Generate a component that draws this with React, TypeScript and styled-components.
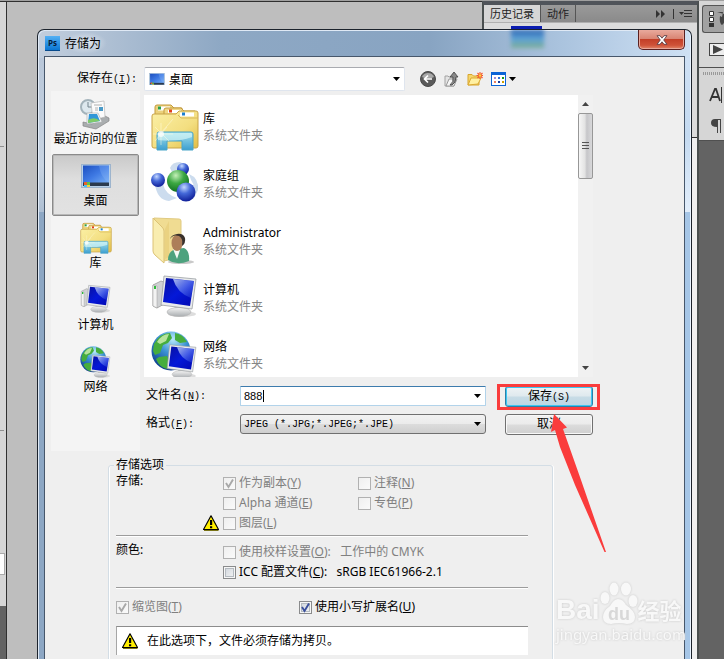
import React from "react";
import styled, { createGlobalStyle, css } from "styled-components";

const uiFont = `"Noto Sans", "Noto Sans CJK SC", sans-serif`;
const monoFont = `"Liberation Mono", "Noto Sans CJK SC", monospace`;

const GlobalStyle = createGlobalStyle`
  * { box-sizing: border-box; }
  html, body, #root { height: 100%; }
  body {
    margin: 0;
    overflow: hidden;
    font: 12px/16px ${uiFont};
    color: #000;
    background: #bebebe;
  }
  button, input, select { font: inherit; color: inherit; margin: 0; padding: 0; }
  svg { flex: none; }
`;

/* ---------- application workspace ---------- */

const Workspace = styled.div`
  position: relative;
  display: grid;
  grid-template-columns: 7px 1fr 216px 26px;
  height: 100%;
  overflow: hidden;
  border-top: 1px solid #a0a0a0;
  background: #bebebe;
`;

const ToolStrip = styled.div`
  display: flex;
  flex-direction: column;
  border-top: 1px solid #303030;
  border-right: 1px solid #303030;
  background: #636363;
`;

const ToolStripTop = styled.div`
  height: 604px;
  padding: 144px 4px 0 0;
  background: #d6d6d6;
`;

const ToolMark = styled.div`
  height: 1px;
  margin-bottom: 283px;
  margin-right: -2px;
  background: #909090;
`;

const ToolSwatch = styled.div`
  height: 22px;
  margin-top: -161px;
  margin-right: -3px;
  border: 1px solid #aaa;
  border-left: 0;
  background: #fff;
`;

const Canvas = styled.div`
  border-top: 1px solid #303030;
`;

const Palette = styled.section`
  border-left: 2px solid #4a4f4f;
  border-right: 1px solid #4a4f4f;
  border-top: 4px solid #50545a;
  background: #f0f0f0;
`;

const PaletteTabs = styled.div`
  display: flex;
  align-items: stretch;
  height: 17px;
  background: linear-gradient(#9a9a9a, #8a8a8a);
`;

const PaletteTab = styled.button<{ $active?: boolean }>`
  border: 0;
  border-right: 1px solid #555;
  padding: 0 6px;
  line-height: 16px;
  font-size: 11px;
  color: #222;
  background: ${(p) => (p.$active ? "#d6d6d6" : "transparent")};
`;

const PaletteTools = styled.div`
  display: flex;
  align-items: center;
  margin-left: auto;
  padding-right: 4px;
`;

const PaletteBody = styled.div`
  height: 116px;
  padding-left: 27px;
  border-top: 1px solid #b0b0b0;
  border-bottom: 1px solid #303030;
  background: #dcdcdc;
`;

const Thumb = styled.div`
  width: 31px;
  height: 26px;
  margin-top: 3px;
  border-top: 3px solid #0a1cb0;
  background: linear-gradient(#3a86cf, #86b9a8 60%, #74a868);
`;

const Dock = styled.aside`
  border-left: 1px solid #4a4f4f;
  background: #636363;
`;

const DockGroup = styled.div<{ $height: number }>`
  display: flex;
  flex-direction: column;
  height: ${(p) => p.$height}px;
  overflow: hidden;
  border-bottom: 1px solid #505050;
  background: #d6d6d6;
`;

const Grip = styled.div`
  height: 3px;
  margin: 4px 0 6px 4px;
  background: repeating-linear-gradient(90deg, #999 0 1px, #d6d6d6 1px 2px);
  &:first-child:not(:only-child) { flex: none; }
`;

const DockSpacer = styled.div`
  flex: none;
  height: 4px;
`;

const DockButton = styled.button<{ $pressed?: boolean; $height: number }>`
  display: flex;
  flex: none;
  align-items: center;
  height: ${(p) => p.$height}px;
  margin-left: 3px;
  padding-left: 6px;
  border: 1px solid ${(p) => (p.$pressed ? "#555" : "transparent")};
  border-right: 0;
  border-radius: 3px 0 0 3px;
  background: ${(p) => (p.$pressed ? "#a2a2a2" : "transparent")};
`;

/* ---------- dialog window ---------- */

const Dialog = styled.section`
  position: absolute;
  top: 28px;
  left: 37px;
  right: 32px;
  bottom: 0;
  display: flex;
  flex-direction: column;
  padding: 0 6px;
  overflow: hidden;
  border: 1px solid #1c232c;
  border-bottom: 0;
  border-radius: 7px 7px 0 0;
  box-shadow: inset 1px 1px 0 #dfe9f5, inset -1px 0 0 #eaf4ff;
  background:
    linear-gradient(90deg, #c2cedd 0, #8ea8c4 28%, #88a4c2 60%, #aac3de 80%, #cfe1f4 100%) 0 0 / 100% 28px no-repeat,
    linear-gradient(#b9c7d9, #c8d4e2 70%, #aebfd3) 0 28px / 50% 154px no-repeat,
    linear-gradient(#cfe1f5, #c4daf1 50%, #e2eefb) 100% 28px / 50% 154px no-repeat,
    linear-gradient(90deg, #8da7c4 50%, #a6c6e7 50%);
`;

const TitleBar = styled.header`
  display: flex;
  align-items: center;
  gap: 5px;
  height: 28px;
`;

const Title = styled.h1`
  margin: 0;
  font: 12px/20px ${uiFont};
  padding: 2px 6px 0 0;
  background: radial-gradient(closest-side, rgba(255, 255, 255, 0.55), rgba(255, 255, 255, 0));
`;

const Glimpse = styled.div`
  width: 33px;
  height: 18px;
  margin: 0 89px 8px auto;
  filter: blur(2px);
  background: linear-gradient(#2e66b4, #5ea3d6 50%, #7fae94);
`;

const CloseButton = styled.button`
  display: grid;
  place-items: center;
  align-self: flex-start;
  width: 47px;
  height: 20px;
  border: 1px solid #5a2020;
  border-top: 0;
  border-radius: 0 0 5px 5px;
  box-shadow: inset 0 0 0 1px #e8a79a;
  background: linear-gradient(#e9aa9d, #d98574 45%, #c33f28 50%, #cf5238 80%, #e2876a);
`;

const Client = styled.form`
  flex: 1;
  padding: 10px 91px 0 6px;
  border: 1px solid #47576b;
  border-bottom: 0;
  background: #efefef;
`;

const LookInRow = styled.div`
  display: flex;
  align-items: center;
  height: 24px;
`;

const FieldLabel = styled.label<{ $width: number; $indent: number }>`
  flex: none;
  width: ${(p) => p.$width}px;
  padding-left: ${(p) => p.$indent}px;
  font-size: 12px;
`;

const Key = styled.span`
  font: 10px/16px ${monoFont};
  white-space: pre;
`;

const LookIn = styled.div`
  position: relative;
  flex: 0 1 261px;
  height: 24px;
`;

const LookInSelect = styled.select`
  appearance: none;
  width: 100%;
  height: 100%;
  padding: 2px 24px 0;
  border: 1px solid #dfe5ee;
  border-top-color: #a9abb0;
  border-radius: 2px;
  background: #fff;
`;

const OverlayIcon = styled.span<{ $side: "left" | "right" }>`
  position: absolute;
  top: 0;
  bottom: 0;
  ${(p) => p.$side}: 5px;
  display: flex;
  align-items: center;
  pointer-events: none;
`;

const Toolbar = styled.div`
  display: flex;
  align-items: center;
  gap: 8px;
  margin-left: 15px;
`;

const ToolButton = styled.button`
  display: flex;
  align-items: center;
  gap: 3px;
  border: 0;
  background: none;
`;

const Browser = styled.div`
  display: grid;
  grid-template-columns: 89px 1fr;
  column-gap: 4px;
`;

const Places = styled.nav`
  display: flex;
  flex-direction: column;
  height: 360px;
  padding: 1px;
  background: #f4f4f4;
`;

const Place = styled.button<{ $selected?: boolean }>`
  display: flex;
  flex-direction: column;
  align-items: center;
  height: 62px;
  padding: 4px 0 0;
  border: 1px solid transparent;
  border-radius: 2px;
  background: none;
  line-height: 16px;
  white-space: nowrap;
  ${(p) =>
    p.$selected &&
    css`
      border-color: #8a8a8a;
      box-shadow: inset 0 0 0 1px #b8b8b8;
      background: linear-gradient(#c9c9c9, #dedede 40%, #e2e2e2);
    `}
`;

const PlaceIcon = styled.span`
  display: grid;
  place-items: center;
  width: 34px;
  height: 34px;
`;

const Main = styled.div`
  display: flex;
  flex-direction: column;
  padding-top: 4px;
`;

const FileArea = styled.div`
  display: grid;
  grid-template-columns: 1fr 15px;
  height: 282px;
`;

const FileList = styled.ul`
  margin: 0;
  padding: 3px 0 0 7px;
  overflow: hidden;
  list-style: none;
  background: #fff;
`;

const FileItem = styled.li`
  display: flex;
  align-items: center;
  gap: 4px;
  height: 57px;
  line-height: 17px;
`;

const FileKind = styled.div`
  color: #858585;
`;

const ScrollTrack = styled.div`
  display: flex;
  flex-direction: column;
  align-items: stretch;
  background: #f1f1f1;
`;

const ScrollArrow = styled.button`
  display: grid;
  place-items: center;
  height: 18px;
  border: 0;
  background: none;
`;

const ScrollThumb = styled.div`
  display: grid;
  place-items: center;
  height: 66px;
  margin-bottom: auto;
  border: 1px solid #979797;
  border-radius: 2px;
  background: linear-gradient(90deg, #f6f6f6, #e3e3e3 45%, #c6c6c9 60%, #d8d8da);
`;

const FileForm = styled.div`
  display: grid;
  grid-template-columns: 96px 1fr 88px;
  grid-auto-rows: 20px;
  gap: 8px 0;
  align-items: center;
  margin-top: 9px;
`;

const Combo = styled.div`
  position: relative;
  height: 20px;
  margin-right: 19px;
`;

const NameInput = styled.input`
  display: block;
  width: 100%;
  height: 20px;
  padding: 0 20px 0 3px;
  border: 1px solid #b2d3ea;
  border-top-color: #3d7bad;
  border-radius: 1px;
  background: #fff;
  font: 11px/18px "Liberation Sans", sans-serif;
`;

const Caret = styled.span`
  position: absolute;
  left: 23px;
  top: 4px;
  width: 1px;
  height: 12px;
  background: #000;
`;

const FormatSelect = styled.select`
  appearance: none;
  display: block;
  width: 100%;
  height: 20px;
  padding: 2px 20px 0 3px;
  border: 1px solid #707070;
  border-radius: 3px;
  background: linear-gradient(#f2f2f2, #ebebeb 48%, #dcdcdc 52%, #cfcfcf);
  font: 10px/16px ${monoFont};
`;

const PushButton = styled.button<{ $primary?: boolean }>`
  height: 21px;
  border: 1px solid ${(p) => (p.$primary ? "#2c7fa8" : "#707070")};
  border-radius: 3px;
  box-shadow: inset 0 0 0 1px ${(p) => (p.$primary ? "#3cc6f2" : "#f8f8f8")};
  background: ${(p) =>
    p.$primary
      ? "linear-gradient(#eef3f5, #dfe9ee 48%, #c8dce6 52%, #bcd6e3)"
      : "linear-gradient(#f2f2f2, #ebebeb 48%, #dcdcdc 52%, #cfcfcf)"};
  line-height: 18px;
`;

const SaveSpot = styled.div`
  position: relative;
  display: grid;
`;

const Highlight = styled.span`
  position: absolute;
  inset: -2px -7px -3px -8px;
  border: 3px solid #fa3c3c;
  pointer-events: none;
`;

const Pointer = styled.svg`
  position: absolute;
  left: 46px;
  top: 24px;
  z-index: 1;
  pointer-events: none;
`;

/* ---------- save options ---------- */

const Options = styled.fieldset`
  min-width: 0;
  margin: 6px 40px 0 57px;
  padding: 0 24px 40px 7px;
  border: 1px solid #d3dde5;
  border-radius: 3px;
  box-shadow: inset 1px 0 0 #fff, 1px 0 0 #fff;
`;

const Legend = styled.legend`
  margin-left: -2px;
  padding: 0 2px;
  line-height: 16px;
`;

const Section = styled.div`
  display: grid;
  grid-template-columns: 107px 135px 1fr;
  grid-auto-rows: 20px;
  padding-bottom: 2px;
  border-bottom: 1px solid #9c9c9c;
  box-shadow: 0 1px 0 #fff;
`;

const ColorSection = styled(Section)`
  grid-template-columns: 107px 1fr;
  padding: 6px 0 5px;
`;

const SectionName = styled.div`
  line-height: 16px;
`;

const WarnCell = styled.div`
  display: flex;
  justify-content: flex-end;
  align-items: center;
  grid-column: 1;
  padding-right: 4px;
`;

const CheckLabel = styled.label<{ $off?: boolean }>`
  display: flex;
  align-items: center;
  gap: 3px;
  white-space: pre;
  color: ${(p) => (p.$off ? "#808080" : "#000")};
`;

const CheckBoxWrap = styled.span`
  position: relative;
  display: flex;
  width: 13px;
  height: 13px;
  flex: none;
`;

const CheckInput = styled.input`
  appearance: none;
  width: 13px;
  height: 13px;
  border: 1px solid #8a8b8c;
  box-shadow: inset 0 0 0 1px #f6f6f6, inset 0 0 0 2px #b4bac0;
  background: linear-gradient(135deg, #cdd3da, #f6f6f6);
  &:disabled {
    border-color: #b1b1b1;
    box-shadow: none;
    background: linear-gradient(135deg, #efefef, #fafafa);
  }
`;

const CheckMark = styled.svg`
  position: absolute;
  inset: 0;
  pointer-events: none;
`;

const BottomChecks = styled.div`
  display: grid;
  grid-template-columns: 183px 1fr;
  align-items: center;
  height: 38px;
`;

const Notice = styled.div`
  display: flex;
  align-items: center;
  gap: 9px;
  height: 29px;
  padding-left: 5px;
  border-top: 1px solid #8c8c8c;
  border-left: 1px solid #a6a6a6;
  background: #fff;
`;

const Watermark = styled.div`
  position: absolute;
  right: 38px;
  bottom: 16px;
  width: 130px;
  color: #f8f8f8;
  pointer-events: none;
  filter: drop-shadow(0 0 1px #c8c8c8);
`;

const WatermarkBrand = styled.div`
  display: flex;
  align-items: flex-end;
  height: 44px;
  font: bold 28px/30px "Liberation Sans", sans-serif;
`;

const WatermarkWord = styled.span`
  font: bold 22px/32px "Noto Sans CJK SC", sans-serif;
`;

const WatermarkUrl = styled.div`
  font: 15px/18px "Noto Sans", sans-serif;
`;

/* ---------- icons ---------- */

const DefsHolder = styled.svg`
  position: absolute;
`;

const SharedGradients = () => (
  <DefsHolder width="0" height="0" aria-hidden>
    <defs>
      <linearGradient id="folder" x1="0" y1="0" x2="1" y2="1">
        <stop offset="0" stopColor="#fbf0a6" />
        <stop offset=".6" stopColor="#f3de80" />
        <stop offset="1" stopColor="#e2bd45" />
      </linearGradient>
      <linearGradient id="stand" x1="0" y1="0" x2="0" y2="1">
        <stop offset="0" stopColor="#a6e2ec" />
        <stop offset="1" stopColor="#3c9fd0" />
      </linearGradient>
      <linearGradient id="screen" x1="0" y1="0" x2="1" y2="1">
        <stop offset="0" stopColor="#0710a0" />
        <stop offset=".5" stopColor="#0418d8" />
        <stop offset="1" stopColor="#0208b0" />
      </linearGradient>
      <linearGradient id="shine" x1="0" y1="0" x2="1" y2="1">
        <stop offset="0" stopColor="#d8e6ff" />
        <stop offset="1" stopColor="#4a74f0" stopOpacity=".2" />
      </linearGradient>
      <linearGradient id="desk" x1="0" y1="0" x2="1" y2="1">
        <stop offset="0" stopColor="#1c4fc0" />
        <stop offset=".5" stopColor="#3f7ae4" />
        <stop offset="1" stopColor="#79b0f5" />
      </linearGradient>
      <linearGradient id="metal" x1="0" y1="0" x2="0" y2="1">
        <stop offset="0" stopColor="#f5f5f5" />
        <stop offset="1" stopColor="#a9adb0" />
      </linearGradient>
      <radialGradient id="blueBall" cx=".4" cy=".25" r=".75">
        <stop offset="0" stopColor="#c4d8ff" />
        <stop offset=".45" stopColor="#4468d8" />
        <stop offset="1" stopColor="#10209a" />
      </radialGradient>
      <radialGradient id="greenBall" cx=".4" cy=".25" r=".8">
        <stop offset="0" stopColor="#c4f0b8" />
        <stop offset=".45" stopColor="#3da843" />
        <stop offset="1" stopColor="#0c6a1e" />
      </radialGradient>
      <radialGradient id="globe" cx=".55" cy=".2" r=".8">
        <stop offset="0" stopColor="#b8e8fa" />
        <stop offset=".45" stopColor="#3c93d4" />
        <stop offset="1" stopColor="#0d3d8c" />
      </radialGradient>
    </defs>
  </DefsHolder>
);

type IconProps = { size: number };

const LibraryIcon = ({ size }: IconProps) => (
  <svg width={size} height={size} viewBox="0 0 48 48">
    <path d="M4 12V4q0-2 2-2h14l3 3h8v8z" fill="#ecd27c" stroke="#c39a3c" />
    <rect x="7" y="3.500" width="12" height="4" fill="#fff" />
    <rect x="7" y="3.500" width="3" height="3" fill="#29a04a" />
    <path d="M13 12V7q0-2 2-2h15l3 3h11v6z" fill="#f0d886" stroke="#c39a3c" />
    <rect x="17" y="7" width="13" height="3" fill="#fff" />
    <rect x="18" y="6.500" width="3" height="3" fill="#e0401c" />
    <path d="M1 13q0-2 2-2h22l3-3h17q2 0 2 2v33q0 2-2 2H3q-2 0-2-2z" fill="url(#folder)" stroke="#c9a448" />
    <rect x="29" y="9.500" width="14" height="4" fill="#fff" />
    <rect x="31" y="9.500" width="3" height="3" fill="#1c7fd0" />
    <path d="M47 15H30l-3-3" fill="none" stroke="#d9b85a" />
    <path d="M6 47V31q0-2 2-2h32q2 0 2 2v16H31v-9H16v9z" fill="url(#stand)" stroke="#4ba5c8" />
    <path d="M7 37V31q0-1 1-1h32q1 0 1 1v3q-12 5-34 3z" fill="#d2f3f5" opacity=".7" />
    <path d="M10 20v22M2 31h20M4 24l14 14M16 24L4 38M10 30l12-14" stroke="#fffbe2" strokeWidth=".8" opacity=".6" />
    <circle cx="10" cy="31" r="3" fill="#fff" opacity=".7" />
  </svg>
);

const HomegroupIcon = ({ size }: IconProps) => (
  <svg width={size} height={size} viewBox="0 0 48 48">
    <path d="M19 8q2-6 10-6l8 4-6 4q-6-2-9 4zM38 14q10 4 9 16l-5 10q4-12-2-20zM4 24q2 16 14 17l8-3Q14 34 12 24z" fill="#ccdcee" />
    <circle cx="32" cy="9" r="6" fill="url(#blueBall)" />
    <circle cx="7" cy="20" r="7" fill="url(#blueBall)" />
    <circle cx="27" cy="21" r="11" fill="url(#greenBall)" />
    <circle cx="35" cy="32" r="9.500" fill="url(#blueBall)" />
  </svg>
);

const UserFolderIcon = ({ size }: IconProps) => (
  <svg width={size} height={size} viewBox="0 0 48 48">
    <ellipse cx="30" cy="45" rx="13" ry="2" fill="#c9c9c9" />
    <path d="M3 1l25 1q2 0 2 2v36l-17 4z" fill="#f0dc92" stroke="#e0ca82" />
    <path d="M2 1l9 9q2 2 2 4v32L4 38q-2-2-2-4z" fill="#f9edb0" stroke="#dcc276" />
    <path d="M14 12l4-8v36l-4 2z" fill="#e4c870" opacity=".5" />
    <path d="M17 43q0-9 8-11l8-1q6 3 5 13-12 5-21-1z" fill="#4da27e" />
    <path d="M22 32l4 10 3-9z" fill="#f4f8f5" />
    <ellipse cx="26" cy="26" rx="5.500" ry="8" fill="#ad7e59" />
    <path d="M19 22q3-5 9-3 4 2 3 10 4-3 3-8-2-5-8-4-6 1-7 5z" fill="#39302b" />
  </svg>
);

const MonitorShape = () => (
  <>
    <ellipse cx="31" cy="39" rx="14" ry="3" fill="#d4d4d4" opacity=".8" />
    <path d="M24 29h8l2 7H23z" fill="#b9bdc0" />
    <ellipse cx="28" cy="37" rx="12" ry="4.500" fill="url(#metal)" stroke="#b4b4b4" strokeWidth=".6" />
    <path d="M13 1l32 3-4 30-31-4z" fill="#e9ebec" stroke="#9b9fa3" strokeWidth=".8" />
    <path d="M15 3l28 3-4 25-27-4z" fill="url(#screen)" />
    <path d="M22 4l21 2-3 17q-14-5-18-19z" fill="url(#shine)" opacity=".8" />
  </>
);

const ComputerIcon = ({ size }: IconProps) => (
  <svg width={size} height={size} viewBox="0 0 48 48">
    <path d="M2 11l8-4 5 2v20L6 34l-4-2z" fill="#cfd1d3" stroke="#999" strokeWidth=".8" />
    <path d="M2 11l4 1v22l-4-2z" fill="#f3f3f3" stroke="#999" strokeWidth=".5" />
    <rect x="3" y="12" width="2" height="3" fill="#2fbb3a" />
    <g transform="translate(0 1)">
      <MonitorShape />
    </g>
  </svg>
);

const NetworkIcon = ({ size }: IconProps) => (
  <svg width={size} height={size} viewBox="0 0 48 48">
    <circle cx="20" cy="20" r="19.500" fill="url(#globe)" />
    <path d="M3 13Q9 2 19 2l2 5-4 5-5 2-3 8-5 2-2-4zM24 2q8 1 12 9l-7 1-5-3zM8 26l8-1 3 6-3 7q-8-2-11-10z" fill="#46ad3d" />
    <path d="M6 11q5-8 12-8l-3 7-6 3z" fill="#b7e39c" />
    <g transform="translate(8 13) scale(.82)">
      <MonitorShape />
    </g>
  </svg>
);

const DesktopIcon = ({ size }: IconProps) => (
  <svg width={size} height={(size * 24) / 30} viewBox="0 0 30 24">
    <rect x=".5" y=".5" width="29" height="23" fill="#b7d0ea" stroke="#9db4cd" />
    <rect x="2" y="1.500" width="26" height="18" fill="url(#desk)" />
    <path d="M18 2h10v17q-8-5-10-17z" fill="#9cc4fa" opacity=".25" />
    <rect x="2" y="18.500" width="26" height="3.500" fill="#2b3a4e" />
    <path d="M3 18h3v3H3z" fill="#e8632c" />
    <path d="M6 18h3v3H6z" fill="#5fc04a" />
    <path d="M3 21h3v2H3z" fill="#49c2f5" />
    <path d="M6 21h3v2H6z" fill="#f5d040" />
  </svg>
);

const RecentIcon = ({ size }: IconProps) => (
  <svg width={size} height={size} viewBox="0 0 32 32">
    <circle cx="8" cy="9" r="7" fill="#dde8ee" stroke="#a3b3bb" strokeWidth="2" />
    <path d="M8 4v5h5" fill="none" stroke="#73838c" />
    <path d="M3 24l9 2 13-8 4 2v3L16 31 3 28z" fill="#a9adaf" stroke="#858585" strokeWidth=".7" />
    <path d="M11 5l13-2 1 16-12 3z" fill="#fbfbfb" stroke="#b8b8b8" strokeWidth=".7" />
    <path d="M14 7h8M15 10h3M15 12h3" stroke="#a0a0a0" strokeWidth=".8" />
    <rect x="19" y="9" width="4" height="4" fill="#4a9ac8" />
    <path d="M7 15h11l4 9-15 2z" fill="#f4f8fa" stroke="#aaa" strokeWidth=".6" />
    <path d="M9 16h8l3 7-12 2z" fill="#3197d8" />
    <path d="M8 22q7-4 12 1l-12 2z" fill="#7fcb68" />
  </svg>
);

const WarningIcon = () => (
  <svg width="16" height="16" viewBox="0 0 16 16">
    <path d="M8 .8L15.500 14.500H.5z" fill="#ffee00" stroke="#000" strokeWidth="1.200" strokeLinejoin="round" />
    <path d="M1 15.500h14.500" stroke="#7a7418" />
    <path d="M7 5h2.200v5H7zM7 11.200h2.200v2H7z" fill="#000" />
  </svg>
);

const DownArrow = ({ color = "#000" }: { color?: string }) => (
  <svg width="7" height="4" viewBox="0 0 7 4">
    <path d="M0 0h7L3.500 4z" fill={color} />
  </svg>
);

const BackIcon = () => (
  <svg width="16" height="16" viewBox="0 0 16 16">
    <circle cx="8" cy="8" r="7.500" fill="#5a5a5a" stroke="#4a4a4a" />
    <path d="M2 6a6.500 6.500 0 0 1 12 0q-6 3-12 0z" fill="#a8a8a8" />
    <path d="M12 8H5M8 4.500L4.500 8 8 11.500" fill="none" stroke="#fff" strokeWidth="1.700" />
  </svg>
);

const UpIcon = () => (
  <svg width="15" height="16" viewBox="0 0 15 16">
    <path d="M1 5h3l1 1h5v9H1z" fill="#e4e4e4" stroke="#a2a2a2" />
    <path d="M2 15l3-7h8l-3 7z" fill="#f6f6f6" stroke="#999" />
    <path d="M6 14q4-3 3-8H6l4-5 4 5h-2q0 6-4 8z" fill="#888" stroke="#3f3f3f" strokeWidth=".8" />
  </svg>
);

const NewFolderIcon = () => (
  <svg width="16" height="16" viewBox="0 0 16 16">
    <path d="M1 14V3.500h4L6.500 5H12v9z" fill="#f5d66c" stroke="#d8a52c" />
    <path d="M1 14l3-7h10l-3 6z" fill="#fff0a2" stroke="#dca931" />
    <path d="M13 1v7M9.500 4.500h7M10.500 2l5 5M15.500 2l-5 5" stroke="#f4552a" strokeWidth="1.100" />
    <circle cx="13" cy="4.500" r="1.300" fill="#ffd23c" />
  </svg>
);

const ViewIcon = () => (
  <svg width="15" height="14" viewBox="0 0 15 14">
    <rect x=".5" y=".5" width="14" height="13" fill="#fff" stroke="#0a63d6" />
    <rect width="15" height="3" fill="#0a63d6" />
    <path d="M3 5h2v2H3z" fill="#a58ad0" />
    <path d="M7 5h2v2H7z" fill="#3070d8" />
    <path d="M11 5h2v2h-2z" fill="#149618" />
    <path d="M3 9h2v2H3z" fill="#f08060" />
    <path d="M7 9h2v2H7z" fill="#1a3c9c" />
    <path d="M11 9h2v2h-2z" fill="#d0a000" />
  </svg>
);

const PsIcon = styled.span`
  width: 15px;
  height: 15px;
  margin-left: 1px;
  border-bottom: 1px solid #064a8c;
  background: linear-gradient(#52b0f5, #0a76d2);
  color: #06203c;
  text-align: center;
  font: bold 8px/14px "Open Sans", sans-serif;
`;

const HistoryIcon = () => (
  <svg width="18" height="18" viewBox="0 0 18 18">
    <path d="M.5 1.500h4v4h-4zM.5 7.500h4v4h-4z" fill="#fff" stroke="#333" />
    <path d="M0 13h5v4H0z" fill="#333" />
    <path d="M8 2h6l-1 5-2-1q-1 7 2 9 5-4 2-11z" fill="#444" />
  </svg>
);

const ActionIcon = () => (
  <svg width="18" height="14" viewBox="0 0 18 14">
    <rect x=".5" y=".5" width="17" height="12" fill="#eee" stroke="#444" />
    <path d="M4 2l10 4.500L4 11z" fill="#444" />
  </svg>
);

const CharacterIcon = () => (
  <svg width="17" height="18" viewBox="0 0 17 18">
    <path d="M1 15L6 3h1l4 12M3 11h6" fill="none" stroke="#333" strokeWidth="1.800" />
    <path d="M12.500 1v16" stroke="#333" />
  </svg>
);

const ParagraphIcon = () => (
  <svg width="14" height="16" viewBox="0 0 14 16">
    <path d="M6 1h6v14h-1V2H9v13H8V9Q2 9 2 5q0-4 4-4z" fill="#444" />
  </svg>
);

/* ---------- composite controls ---------- */

type CheckProps = { checked?: boolean; off?: boolean; children: React.ReactNode };

const Check = ({ checked, off, children }: CheckProps) => (
  <CheckLabel $off={off}>
    <CheckBoxWrap>
      <CheckInput type="checkbox" defaultChecked={checked} disabled={off} />
      {checked && (
        <CheckMark width="13" height="13" viewBox="0 0 13 13">
          <path d="M3 6l2.500 4L10 2.500" fill="none" stroke={off ? "#a8a8a8" : "#3a4f9c"} strokeWidth="1.900" />
        </CheckMark>
      )}
    </CheckBoxWrap>
    <span>{children}</span>
  </CheckLabel>
);

const places = [
  { name: "最近访问的位置", icon: <RecentIcon size={32} /> },
  { name: "桌面", icon: <DesktopIcon size={30} />, selected: true },
  { name: "库", icon: <LibraryIcon size={32} /> },
  { name: "计算机", icon: <ComputerIcon size={32} /> },
  { name: "网络", icon: <NetworkIcon size={32} /> },
];

const files = [
  { name: "库", icon: <LibraryIcon size={48} /> },
  { name: "家庭组", icon: <HomegroupIcon size={48} /> },
  { name: "Administrator", icon: <UserFolderIcon size={48} /> },
  { name: "计算机", icon: <ComputerIcon size={48} /> },
  { name: "网络", icon: <NetworkIcon size={48} /> },
];

export default function App() {
  return (
    <Workspace>
      <GlobalStyle />
      <SharedGradients />
      <ToolStrip>
        <ToolStripTop>
          <ToolMark />
          <ToolMark />
          <ToolSwatch />
        </ToolStripTop>
      </ToolStrip>
      <Canvas />
      <Palette>
        <PaletteTabs>
          <PaletteTab $active>历史记录</PaletteTab>
          <PaletteTab>动作</PaletteTab>
          <PaletteTools>
            <svg width="38" height="10" viewBox="0 0 38 10">
              <path d="M1 1l4 4-4 4zM6 1l4 4-4 4z" fill="#333" />
              <path d="M18.500 0v10M29 1.500h8M29 4.500h8M29 7.500h8" stroke="#333" />
              <path d="M24 3h5l-2.500 3z" fill="#333" />
            </svg>
          </PaletteTools>
        </PaletteTabs>
        <PaletteBody>
          <Thumb />
        </PaletteBody>
      </Palette>
      <Dock>
        <DockGroup $height={67}>
          <DockSpacer />
          <DockButton $pressed $height={28} aria-label="历史记录"><HistoryIcon /></DockButton>
          <DockButton $height={34} aria-label="动作"><ActionIcon /></DockButton>
        </DockGroup>
        <DockGroup $height={73}>
          <Grip />
          <DockButton $height={28} aria-label="字符"><CharacterIcon /></DockButton>
          <DockButton $height={34} aria-label="段落"><ParagraphIcon /></DockButton>
        </DockGroup>
      </Dock>

      <Dialog role="dialog" aria-label="存储为">
        <TitleBar>
          <PsIcon>Ps</PsIcon>
          <Title>存储为</Title>
          <Glimpse />
          <CloseButton aria-label="关闭">
            <svg width="12" height="10" viewBox="0 0 12 10">
              <path d="M1 .7h3l2 2.500 2-2.500h3L7.700 5 11 9.300H8L6 6.800 4 9.300H1L4.300 5z" fill="#fff" stroke="#5c4046" strokeWidth=".9" />
            </svg>
          </CloseButton>
        </TitleBar>

        <Client onSubmit={(e) => e.preventDefault()}>
          <LookInRow>
            <FieldLabel htmlFor="lookin" $width={93} $indent={26}>
              保存在<Key>(<u>I</u>):</Key>
            </FieldLabel>
            <LookIn>
              <LookInSelect id="lookin">
                <option>桌面</option>
              </LookInSelect>
              <OverlayIcon $side="left"><DesktopIcon size={16} /></OverlayIcon>
              <OverlayIcon $side="right"><DownArrow /></OverlayIcon>
            </LookIn>
            <Toolbar>
              <ToolButton type="button" aria-label="后退"><BackIcon /></ToolButton>
              <ToolButton type="button" aria-label="向上一级"><UpIcon /></ToolButton>
              <ToolButton type="button" aria-label="新建文件夹"><NewFolderIcon /></ToolButton>
              <ToolButton type="button" aria-label="查看"><ViewIcon /><DownArrow /></ToolButton>
            </Toolbar>
          </LookInRow>

          <Browser>
            <Places>
              {places.map((p) => (
                <Place key={p.name} type="button" $selected={p.selected}>
                  <PlaceIcon>{p.icon}</PlaceIcon>
                  {p.name}
                </Place>
              ))}
            </Places>
            <Main>
              <FileArea>
                <FileList>
                  {files.map((f) => (
                    <FileItem key={f.name}>
                      {f.icon}
                      <div>
                        <div>{f.name}</div>
                        <FileKind>系统文件夹</FileKind>
                      </div>
                    </FileItem>
                  ))}
                </FileList>
                <ScrollTrack>
                  <ScrollArrow type="button" aria-label="向上滚动">
                    <svg width="7" height="4" viewBox="0 0 7 4"><path d="M0 4h7L3.500 0z" fill="#444" /></svg>
                  </ScrollArrow>
                  <ScrollThumb>
                    <svg width="7" height="8" viewBox="0 0 7 8">
                      <path d="M0 .5h7M0 3.500h7M0 6.500h7" stroke="#555" />
                    </svg>
                  </ScrollThumb>
                  <ScrollArrow type="button" aria-label="向下滚动"><DownArrow color="#444" /></ScrollArrow>
                </ScrollTrack>
              </FileArea>

              <FileForm>
                <FieldLabel htmlFor="filename" $width={95} $indent={2}>
                  文件名<Key>(<u>N</u>):</Key>
                </FieldLabel>
                <Combo>
                  <NameInput id="filename" defaultValue="888" />
                  <Caret />
                  <OverlayIcon $side="right"><DownArrow /></OverlayIcon>
                </Combo>
                <SaveSpot>
                  <PushButton $primary type="submit">
                    保存<Key>(S)</Key>
                  </PushButton>
                  <Highlight />
                  <Pointer width="56" height="144" viewBox="0 0 56 144">
                    <path d="M3 4L16 17.500 12 19 18 36 30 70 55 142 53.500 142 24 75 9 37 4 20 0 22z" fill="#fa3c3c" />
                  </Pointer>
                </SaveSpot>
                <FieldLabel htmlFor="format" $width={95} $indent={2}>
                  格式<Key>(<u>F</u>):</Key>
                </FieldLabel>
                <Combo>
                  <FormatSelect id="format">
                    <option>JPEG (*.JPG;*.JPEG;*.JPE)</option>
                  </FormatSelect>
                  <OverlayIcon $side="right"><DownArrow /></OverlayIcon>
                </Combo>
                <PushButton type="button">取消</PushButton>
              </FileForm>
            </Main>
          </Browser>

          <Options>
            <Legend>存储选项</Legend>
            <Section>
              <SectionName>存储:</SectionName>
              <Check off checked>作为副本(<u>Y</u>)</Check>
              <Check off>注释(<u>N</u>)</Check>
              <span />
              <Check off>Alpha 通道(<u>E</u>)</Check>
              <Check off>专色(<u>P</u>)</Check>
              <WarnCell><WarningIcon /></WarnCell>
              <Check off>图层(<u>L</u>)</Check>
            </Section>
            <ColorSection>
              <SectionName>颜色:</SectionName>
              <Check off>使用校样设置(<u>O</u>):   工作中的 CMYK</Check>
              <span />
              <Check>ICC 配置文件(<u>C</u>):   sRGB IEC61966-2.1</Check>
            </ColorSection>
            <BottomChecks>
              <Check off checked>缩览图(<u>T</u>)</Check>
              <Check checked>使用小写扩展名(<u>U</u>)</Check>
            </BottomChecks>
            <Notice>
              <WarningIcon />
              在此选项下，文件必须存储为拷贝。
            </Notice>
          </Options>
        </Client>
      </Dialog>

      <Watermark aria-hidden>
        <WatermarkBrand>
          Bai
          <svg width="38" height="44" viewBox="0 0 38 44">
            <ellipse cx="14" cy="8" rx="4.500" ry="6.500" fill="#f8f8f8" />
            <ellipse cx="26" cy="8" rx="5" ry="6.500" fill="#f8f8f8" />
            <ellipse cx="5" cy="17" rx="4.500" ry="6" fill="#f8f8f8" />
            <ellipse cx="33" cy="20" rx="4.500" ry="6" fill="#f8f8f8" />
            <path d="M18 18q5 0 8 6 9 6 9 12 0 7-8 7-8-2-16 0-8 0-8-7 0-6 7-11 4-7 8-7z" fill="#f8f8f8" />
            <text x="8" y="39" fontSize="18" fontWeight="bold" fontFamily="Liberation Sans" fill="#d8d8d8">du</text>
          </svg>
          <WatermarkWord>经验</WatermarkWord>
        </WatermarkBrand>
        <WatermarkUrl>jingyan.baidu.com</WatermarkUrl>
      </Watermark>
    </Workspace>
  );
}
